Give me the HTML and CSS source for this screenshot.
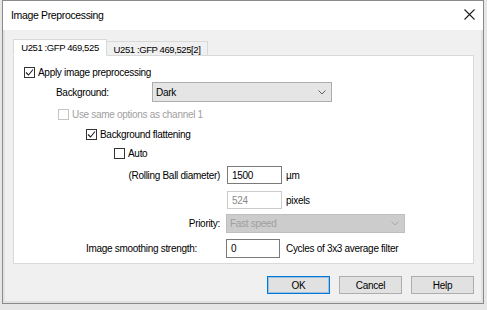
FILE: index.html
```html
<!DOCTYPE html>
<html lang="en">

<head>
  <meta charset="UTF-8">
  <meta name="viewport" content="width=device-width, initial-scale=1.0">
  <link rel="stylesheet" href="styles.css">
</head>

<body>
  <div class="window">
    <div class="titlebar">
      <span class="title">Image Preprocessing</span>
      <svg class="close" width="11" height="11" viewBox="0 0 11 11">
        <path d="M0.5 0.5L10.5 10.5M10.5 0.5L0.5 10.5" stroke="#1e1e1e" stroke-width="1.1" fill="none" />
      </svg>
    </div>

    <div class="client">
      <div class="tabs">
        <div class="tab active">U251 :GFP 469,525</div>
        <div class="tab">U251 :GFP 469,525[2]</div>
      </div>

      <div class="panel">
        <div class="row row-apply">
          <span class="check checked">
            <svg width="9" height="9" viewBox="0 0 9 9"><path d="M1 4.5L3.5 7L8 1.5" stroke="#1e1e1e" stroke-width="1.1" fill="none" /></svg>
          </span>
          <span>Apply image preprocessing</span>
        </div>

        <div class="row row-background">
          <span class="label-bg">Background:</span>
          <div class="select">
            <span>Dark</span>
            <svg width="8" height="5" viewBox="0 0 8 5"><path d="M0.5 0.5L4 4L7.5 0.5" stroke="#606060" fill="none" /></svg>
          </div>
        </div>

        <div class="row row-same disabled">
          <span class="check"></span>
          <span>Use same options as channel 1</span>
        </div>

        <div class="row row-flatten">
          <span class="check checked">
            <svg width="9" height="9" viewBox="0 0 9 9"><path d="M1 4.5L3.5 7L8 1.5" stroke="#1e1e1e" stroke-width="1.1" fill="none" /></svg>
          </span>
          <span>Background flattening</span>
        </div>

        <div class="row row-auto">
          <span class="check"></span>
          <span>Auto</span>
        </div>

        <div class="row row-ball">
          <span class="field-label">(Rolling Ball diameter)</span>
          <div class="input">1500</div>
          <span class="unit">µm</span>
        </div>

        <div class="row row-pixels">
          <span class="field-label"></span>
          <div class="input disabled">524</div>
          <span class="unit">pixels</span>
        </div>

        <div class="row row-priority">
          <span class="field-label">Priority:</span>
          <div class="select disabled">
            <span>Fast speed</span>
            <svg width="8" height="5" viewBox="0 0 8 5"><path d="M0.5 0.5L4 4L7.5 0.5" stroke="#a9a9a9" fill="none" /></svg>
          </div>
        </div>

        <div class="row row-smooth">
          <span class="smooth-label">Image smoothing strength:</span>
          <div class="input small">0</div>
          <span class="unit wide">Cycles of 3x3 average filter</span>
        </div>
      </div>

      <div class="buttons">
        <div class="button default">OK</div>
        <div class="button">Cancel</div>
        <div class="button">Help</div>
      </div>
    </div>
  </div>
</body>

</html>
```

FILE: styles.css
```css
* {
  margin: 0;
  box-sizing: border-box;
}

body {
  width: 487px;
  height: 310px;
  overflow: hidden;
  background: #e6e6e6;
  font-family: "Liberation Sans", Arial, sans-serif;
  font-size: 10px;
  letter-spacing: -0.3px;
  color: #000;
}

.window {
  width: 482px;
  height: 304px;
  margin-left: 2px;
  border: 1px solid #8a8a8a;
  display: flex;
  flex-direction: column;
  background: #f0f0f0;
}

/* Title bar */
.titlebar {
  height: 29px;
  background: #fff;
  display: flex;
  align-items: center;
  justify-content: space-between;
  padding: 0 8px 0 8px;
}

.title {
  font-size: 10.5px;
  letter-spacing: -0.35px;
  padding-bottom: 2px;
}

.close {
  margin-bottom: 3px;
}

/* Client area */
.client {
  flex: 1;
  padding: 9px 9px 0 10px;
  display: flex;
  flex-direction: column;
  box-shadow: inset 2px 0 0 #e2e2e2, inset -2px 0 0 #e2e2e2, inset 0 -2px 0 #e2e2e2;
}

.tabs {
  display: flex;
  align-items: flex-end;
  height: 17px;
  margin-bottom: -1px;
}

.tab {
  height: 15px;
  border: 1px solid #d9d9d9;
  border-bottom: none;
  border-left: none;
  background: #f0f0f0;
  display: flex;
  align-items: center;
  justify-content: center;
  width: 101px;
  white-space: nowrap;
  font-size: 9.5px;
  letter-spacing: -0.4px;
}

.tab.active {
  position: relative;
  z-index: 1;
  height: 17px;
  width: 94px;
  background: #fff;
  border-left: 1px solid #d9d9d9;
  border-bottom: 1px solid #fff;
  padding-bottom: 1px;
}

.panel {
  height: 209px;
  background: #fff;
  border: 1px solid #d9d9d9;
  padding-top: 9px;
  display: flex;
  flex-direction: column;
}

.row {
  display: flex;
  align-items: center;
  white-space: nowrap;
}

.disabled {
  color: #a0a0a0;
}

/* Checkboxes */
.check {
  width: 11px;
  height: 11px;
  border: 1px solid #333;
  background: #fff;
  display: flex;
  align-items: center;
  justify-content: center;
  margin-right: 3px;
}

.disabled .check {
  border-color: #c4c4c4;
}

.row-apply {
  height: 14px;
  padding-left: 10px;
}

.row-background {
  margin-top: 3px;
  padding-left: 42px;
}

.label-bg {
  width: 96px;
}

.row-same {
  height: 12px;
  margin-top: 6px;
  padding-left: 44px;
}

.row-flatten {
  height: 12px;
  margin-top: 8px;
  padding-left: 72px;
}

.row-auto {
  height: 12px;
  margin-top: 7px;
  padding-left: 100px;
}

.row-ball {
  margin-top: 7px;
}

.row-pixels {
  margin-top: 7px;
}

.row-priority {
  margin-top: 5px;
}

.row-smooth {
  margin-top: 6px;
}

.field-label {
  width: 206px;
  text-align: right;
  margin-right: 7px;
}

.row-priority .field-label {
  margin-right: 6px;
}

.smooth-label {
  width: 212px;
  padding-left: 72px;
}

/* Combo boxes */
.select {
  width: 180px;
  height: 20px;
  background: #e5e5e5;
  border: 1px solid #adadad;
  display: flex;
  align-items: center;
  justify-content: space-between;
  padding: 0 5px 0 3px;
}

.select.disabled {
  width: 179px;
  height: 19px;
  background: #cccccc;
  border-color: #bfbfbf;
}

/* Edit boxes */
.input {
  width: 55px;
  height: 18px;
  border: 1px solid #7a7a7a;
  background: #fff;
  padding-left: 4px;
  display: flex;
  align-items: center;
}

.input.disabled {
  border-color: #cccccc;
  color: #8a8a8a;
}

.input.small {
  width: 54px;
  height: 19px;
}

.unit {
  margin-left: 4px;
}

.unit.wide {
  margin-left: 6px;
}

/* Buttons */
.buttons {
  display: flex;
  justify-content: flex-end;
  gap: 9px;
  margin-top: 12px;
}

.button {
  width: 63px;
  height: 18px;
  background: #e1e1e1;
  border: 1px solid #adadad;
  display: flex;
  align-items: center;
  justify-content: center;
}

.button.default {
  border-color: #0078d7;
  box-shadow: inset 0 0 0 1px rgba(0, 120, 215, 0.3);
}
```
